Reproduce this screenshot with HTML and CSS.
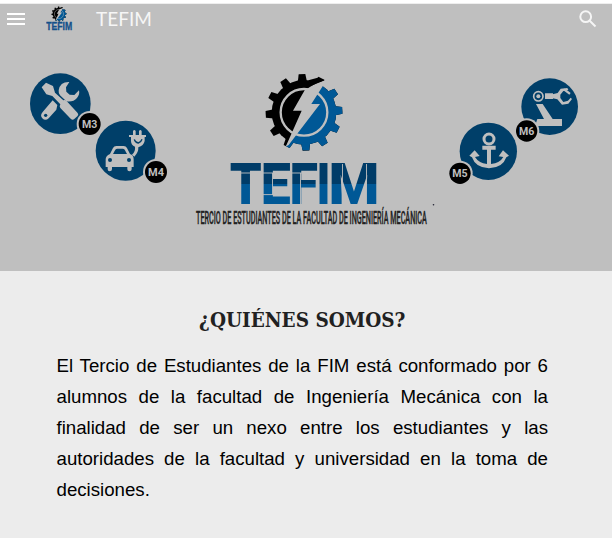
FILE: index.html
```html
<!DOCTYPE html>
<html lang="es">
<head>
<meta charset="utf-8">
<title>TEFIM</title>
<link rel="stylesheet" href="styles.css">
</head>
<body>
<section class="banner">
  <header class="bar">
    <svg class="menu" viewBox="0 0 18 12"><path d="M0 1h18M0 6h18M0 11h18"/></svg>
    <svg class="brand-logo" viewBox="46 4 27 30">
      <g transform="translate(49.4 4.800) scale(.065)"><use href="#gear"/></g>
      <text class="brand-mark" x="46.2" y="30" textLength="26" lengthAdjust="spacingAndGlyphs">TEFIM</text>
    </svg>
    <span class="site-name">TEFIM</span>
    <svg class="search" viewBox="0 0 18 18"><circle cx="6.7" cy="6.7" r="5.4"/><path d="M10.7 10.7l5.8 5.8"/></svg>
  </header>
  <svg class="hero" viewBox="0 34 612 237">
    <defs>
      <linearGradient id="steel" gradientUnits="userSpaceOnUse" x1="0" y1="164" x2="0" y2="204">
        <stop offset=".5" stop-color="#003c68"/><stop offset=".5" stop-color="#005896"/>
      </linearGradient>
      <clipPath id="right-half"><path d="M221 25L85 257H290V25z"/></clipPath>
      <path id="tooth" d="M133 52L137 27H157L161 52z"/>
      <g id="wheel">
        <circle cx="147" cy="142" r="97"/>
        <g transform="rotate(-3 147 142)">
          <use href="#tooth"/>
          <use href="#tooth" transform="rotate(30 147 142)"/>
          <use href="#tooth" transform="rotate(60 147 142)"/>
          <use href="#tooth" transform="rotate(90 147 142)"/>
          <use href="#tooth" transform="rotate(120 147 142)"/>
          <use href="#tooth" transform="rotate(150 147 142)"/>
          <use href="#tooth" transform="rotate(180 147 142)"/>
          <use href="#tooth" transform="rotate(210 147 142)"/>
          <use href="#tooth" transform="rotate(240 147 142)"/>
          <use href="#tooth" transform="rotate(270 147 142)"/>
          <use href="#tooth" transform="rotate(300 147 142)"/>
          <use href="#tooth" transform="rotate(330 147 142)"/>
        </g>
      </g>
      <g id="gear">
        <use href="#wheel" fill="#000"/>
        <g clip-path="url(#right-half)"><use href="#wheel" fill="#005896"/></g>
        <circle cx="147" cy="142" r="70" fill="none" stroke="#bfbfbf" stroke-width="7"/>
        <path fill="#bfbfbf" d="M209 46Q176 57 149 76L114 137H140L92 245L101 240L195 117H169L204 62L230 40L215 30z"/>
        <path fill="#000" d="M160 46L188 38L209 46Q190 52 170 62z"/>
      </g>
    </defs>

    <g transform="translate(255 65) scale(.3333)"><use href="#gear"/></g>

    <text class="wordmark" y="204"><tspan x="229.7" textLength="32" lengthAdjust="spacingAndGlyphs">T</tspan><tspan x="260.7" textLength="30" lengthAdjust="spacingAndGlyphs">E</tspan><tspan x="289.5" textLength="28.500" lengthAdjust="spacingAndGlyphs">F</tspan><tspan x="316.5" textLength="14" lengthAdjust="spacingAndGlyphs">I</tspan><tspan x="328.5" textLength="51" lengthAdjust="spacingAndGlyphs">M</tspan></text>
    <path class="cuts" d="M230 173H318M272.500 173V195M263 194.600H289M300.500 173V204M342.500 164V204M366.500 164V204"/>
    <text class="tagline" transform="translate(196 223.500) scale(.4 1)" x="0" y="0" textLength="577" lengthAdjust="spacingAndGlyphs">TERCIO DE ESTUDIANTES DE LA FACULTAD DE INGENIERÍA MECÁNICA</text>
    <circle cx="433.500" cy="204.800" r=".8" fill="#223"/>

    <g class="area" transform="translate(20 60) scale(.3333)">
      <circle class="disc" cx="121" cy="131" r="91"/>
      <path d="M65 82L78 68L99 78L105 98L130 121Q135 118 139 122L173 159Q177 164 172 169L162 178Q157 181 152 176L121 144Q117 139 121 133L97 108L79 103z"/>
      <path d="M98 121L112 135L109 149L86 175Q76 184 67 175Q59 166 68 156z"/>
      <path d="M148 66Q120 65 116 91Q115 100 120 106L139 124Q160 127 171 114Q180 103 177 91L163 105L149 104L139 95L138 82z"/>
      <circle class="disc" cx="77" cy="166" r="5"/>
      <circle class="halo" cx="209" cy="192" r="39"/><circle class="badge" cx="209" cy="192" r="33"/>
      <text x="209" y="203" textLength="46" lengthAdjust="spacingAndGlyphs">M3</text>
    </g>

    <g class="area" transform="translate(85 110) scale(.3333)">
      <circle class="disc" cx="122" cy="122" r="90"/>
      <path d="M75 132L84 114Q87 108 94 108H116Q123 108 126 114L135 132Q146 135 146 148V171H140V178Q140 184 133 184Q127 184 127 178V171H81V178Q81 184 74 184Q68 184 68 178V171H62V148Q62 137 75 132z"/>
      <path class="disc" d="M84 132L91 119Q93 116 97 116H113Q117 116 119 119L126 132z"/>
      <circle class="disc" cx="75" cy="150" r="6"/><circle class="disc" cx="132" cy="150" r="6"/>
      <path d="M144 75V63Q148 57 152 63V75H162V63Q166 57 170 63V75H183V81H179V93Q176 107 160 112Q161 127 148 140L141 134Q152 124 150 110Q138 105 138 93V81H132V75z"/>
      <path class="line-dark" d="M148 88Q150 97 160 99Q168 97 171 88"/>
      <circle class="halo" cx="213" cy="186" r="39"/><circle class="badge" cx="213" cy="186" r="33"/>
      <text x="213" y="197" textLength="48" lengthAdjust="spacingAndGlyphs">M4</text>
    </g>

    <g class="area" transform="translate(505 70) scale(.3333)">
      <circle class="disc" cx="134" cy="110" r="85"/>
      <circle class="line" cx="100" cy="79" r="14"/><circle cx="100" cy="79" r="6"/>
      <path d="M120 70H144V87H120zM93 102H113L143 147H171V168H90L97 147H117z"/>
      <path d="M143 73L158 69L167 56L187 54L190 59L175 63L166 74V84L175 96L189 92L197 83L201 87L190 101L171 104L157 88L143 85zM179 55L197 69L193 74L175 61z"/>
      <circle class="halo" cx="65" cy="183" r="38"/><circle class="badge" cx="65" cy="183" r="32"/>
      <text x="65" y="194" textLength="46" lengthAdjust="spacingAndGlyphs">M6</text>
    </g>

    <g class="area" transform="translate(440 110) scale(.3333)">
      <circle class="disc" cx="145" cy="124" r="86"/>
      <circle class="line ring" cx="147" cy="87" r="15"/>
      <path d="M127 107H167V119H153V162Q180 159 190 141L176 139L189 121L207 137L199 142Q188 174 147 175Q107 174 96 142L88 137L104 121L119 138L105 141Q116 159 141 162V119H127z"/>
      <circle class="halo" cx="60" cy="190" r="38"/><circle class="badge" cx="60" cy="190" r="32"/>
      <text x="60" y="201" textLength="46" lengthAdjust="spacingAndGlyphs">M5</text>
    </g>
  </svg>
</section>
<main class="about">
  <h1>¿QUIÉNES SOMOS?</h1>
  <p>El Tercio de Estudiantes de la FIM está conformado por 6 alumnos de la facultad de Ingeniería Mecánica con la finalidad de ser un nexo entre los estudiantes y las autoridades de la facultad y universidad en la toma de decisiones.</p>
</main>
</body>
</html>
```
FILE: styles.css
```css
* { box-sizing: border-box; }
body {
  margin: 0;
  padding-top: 3px;
  background: #fff;
  font-family: "Liberation Sans", Arial, sans-serif;
}
.banner {
  height: 268px;
  border-top: 1px solid #eee;
  background: #bfbfbf;
}
.bar {
  display: flex;
  align-items: center;
  height: 30px;
  padding: 0 15px 0 7px;
}
.menu { width: 18px; height: 12px; fill: none; stroke: #fff; stroke-width: 2; }
.brand-logo { width: 27px; height: 30px; margin-left: 21px; }
.brand-mark { font: bold 10px "Liberation Sans", sans-serif; fill: #14508a; stroke: #14508a; stroke-width: .3px; }
.site-name {
  margin-left: 23px;
  color: #f6f6f6;
  font: 400 19px/30px Lato, sans-serif;
}
.search { width: 18px; height: 18px; margin-left: auto; fill: none; stroke: #f5f5f5; stroke-width: 2; }
.hero { display: block; width: 612px; height: 237px; }
.wordmark { font: 900 57px Roboto, sans-serif; fill: url(#steel); }
.cuts { fill: none; stroke: #bfbfbf; stroke-width: .9px; }
.tagline { font: 500 17.500px Roboto, sans-serif; fill: #222; stroke: #222; stroke-width: .4px; }
.area { fill: #bfbfbf; }
.area .disc { fill: #003f69; }
.area .halo { fill: #bfbfbf; }
.area .badge { fill: #000; }
.area .line { fill: none; stroke: #bfbfbf; stroke-width: 5px; }
.area .ring { stroke-width: 9px; }
.area .line-dark { fill: none; stroke: #003f69; stroke-width: 4px; }
.area text { font: bold 32px Roboto, sans-serif; text-anchor: middle; }
.about {
  height: 267px;
  padding: 34px 64px 0 56.5px;
  background: #ececec;
}
h1 {
  margin: 0;
  color: #212121;
  font: bold 20.5px/30px "DejaVu Serif Condensed", "DejaVu Serif", serif;
  text-align: center;
  white-space: nowrap;
}
p {
  margin: 15px 0 0;
  color: #000;
  font-size: 18.667px;
  line-height: 31px;
  text-align: justify;
}
```
